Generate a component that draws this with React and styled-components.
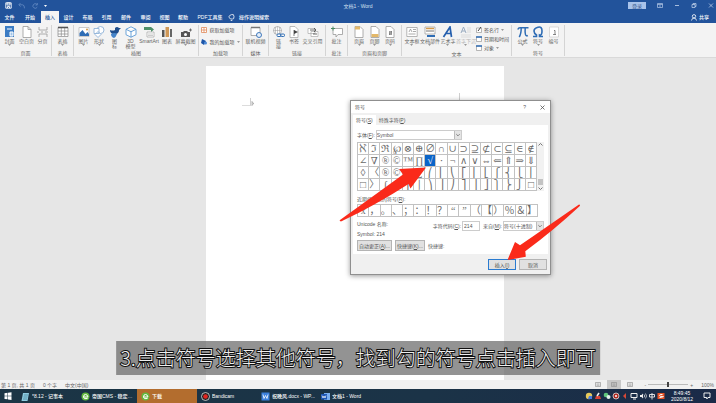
import React, { useState } from 'react';
import styled, { createGlobalStyle, css } from 'styled-components';

const GlobalStyle = createGlobalStyle`
  * {
    box-sizing: border-box;
  }

  body {
    margin: 0;
    font-family: 'Liberation Sans', 'Noto Sans CJK SC', sans-serif;
    font-size: 5px;
    line-height: 6px;
    color: #555;
  }

  button, input, select {
    font: inherit;
    color: inherit;
    margin: 0;
    padding: 0;
    border: none;
    border-radius: 0;
    background: transparent;
    appearance: none;
    outline: none;
  }

  svg {
    display: block;
    flex: none;
  }
`;

const Screen = styled.div`
  position: relative;
  display: flex;
  flex-direction: column;
  height: 100vh;
  overflow: hidden;
  background: #e6e6e6;
`;

const TitleBar = styled.header`
  display: grid;
  grid-template-columns: 1fr auto 1fr;
  align-items: center;
  height: 11px;
  flex: none;
  background: #22539b;
  color: #d5e0f0;
`;

const QuickAccess = styled.div`
  display: flex;
  align-items: center;
  gap: 6px;
  padding-left: 5px;
`;

const WindowControls = styled.div`
  display: flex;
  align-items: center;
  justify-content: flex-end;
  gap: 11px;
  padding-right: 2px;
`;

const LoginButton = styled.button`
  width: 18px;
  height: 7px;
  background: #a9c3ea;
  color: #33558c;
`;

const TabBar = styled.nav`
  display: flex;
  align-items: stretch;
  height: 12px;
  flex: none;
  background: #22539b;
`;

const TabButton = styled.button`
  width: ${({ $width }) => $width}px;
  color: #fff;
  font-weight: 500;
  white-space: nowrap;

  ${({ $active }) =>
    $active &&
    css`
      background: #f4f4f4;
      color: #2b579a;
    `}
`;

const Hint = styled.button`
  display: flex;
  align-items: center;
  gap: 4px;
  color: #fff;
  font-weight: 500;
  white-space: nowrap;
`;

const Share = styled(Hint)`
  gap: 2px;
  margin-left: auto;
  padding-right: 7px;
`;

const Ribbon = styled.div`
  display: flex;
  height: 35px;
  flex: none;
  padding: 2px 0 1px;
  background: #f3f3f3;
  border-bottom: 1px solid #d9d9d9;
`;

const Group = styled.section`
  display: flex;
  flex-direction: column;
  justify-content: space-between;
  width: ${({ $width }) => $width}px;
  border-right: 1px solid #d4d4d4;
`;

const GroupBody = styled.div`
  display: flex;
  justify-content: center;
`;

const GroupLabel = styled.div`
  text-align: center;
  white-space: nowrap;
  color: #666;
`;

const Tool = styled.button`
  display: flex;
  flex-direction: column;
  align-items: center;
  width: ${({ $width }) => $width}px;
  flex: none;
  padding-top: 1px;
  white-space: pre;
  line-height: 5px;
  color: ${({ $dim }) => ($dim ? '#b5b5b5' : '#666')};
`;

const ToolIcon = styled.svg`
  width: 12px;
  height: 12px;
  margin-bottom: 1px;
`;

const Stack = styled.div`
  display: flex;
  flex-direction: column;
  gap: ${({ $gap }) => $gap}px;
  padding-top: 2px;
`;

const RowTool = styled.button`
  display: flex;
  align-items: center;
  gap: 2px;
  white-space: nowrap;
`;

const Canvas = styled.main`
  flex: 1;
  min-height: 0;
  display: flex;
  justify-content: center;
  padding: 8px 6px 0 0;
`;

const Paper = styled.article`
  display: flex;
  justify-content: space-between;
  width: 42%;
  min-width: 296px;
  padding: 27px 36px 0;
  background: #fff;
`;

const Margin = styled.div`
  width: 9px;
  height: 8px;
  border-bottom: 1px solid #dcdcdc;
  ${({ $side }) => ($side === 'left' ? 'border-right' : 'border-left')}: 1px solid #cfcfcf;
`;

const StartMark = styled.div`
  display: flex;
  align-items: flex-end;
  height: 13px;
`;

const Dialog = styled.div`
  position: absolute;
  left: 350px;
  top: 100px;
  width: 201px;
  background: #f0f0f0;
  border: 1px solid #8f8f8f;
  box-shadow: 0 1px 5px rgba(0, 0, 0, 0.4);
`;

const DialogTitle = styled.div`
  display: flex;
  align-items: center;
  height: 12px;
  padding: 0 5px 0 4px;
  background: #fff;
`;

const DialogActions = styled.div`
  display: flex;
  align-items: center;
  gap: 14px;
  margin-left: auto;
`;

const DialogTabs = styled.div`
  display: flex;
  height: 12px;
  padding: 2px 2px 0;
`;

const DialogTab = styled.button`
  padding: 0 3px;
  background: ${({ $active }) => ($active ? '#fff' : 'transparent')};
`;

const Panel = styled.div`
  margin: 0 2px;
  padding: 5px 4px 3px;
  background: #fff;
`;

const Field = styled.div`
  display: flex;
  align-items: center;
  gap: 1px;
  height: 10px;
`;

const SelectBox = styled.div`
  display: flex;
  align-items: center;
  width: ${({ $width }) => $width}px;
  height: 10px;
  border: 1px solid #ccc;

  select {
    flex: 1;
    min-width: 0;
  }

  svg {
    width: 7px;
    height: 8px;
    background: #e4e4e4;
    border-left: 1px solid #bbb;
  }
`;

const CodeInput = styled.input`
  width: 18px;
  height: 10px;
  padding-left: 1px;
  border: 1px solid #ccc;
  margin-right: 2px;
`;

const SymbolArea = styled.div`
  display: flex;
  margin-top: 2px;
`;

const SymbolGrid = styled.div`
  display: grid;
  grid-template-columns: repeat(16, 1fr);
  gap: 1px;
  width: 181px;
  padding: 1px;
  background: #c2c2c2;
`;

const SymbolCell = styled.button`
  height: 11px;
  min-width: 0;
  overflow: hidden;
  background: ${({ $selected }) => ($selected ? '#0a64c8' : '#fff')};
  color: ${({ $selected }) => ($selected ? '#fff' : '#6a6a6a')};
  font-family: 'Liberation Serif', 'DejaVu Serif', 'Noto Sans CJK SC', serif;
  font-size: 10px;
  line-height: 11px;
`;

const ScrollTrack = styled.div`
  display: flex;
  flex-direction: column;
  justify-content: space-between;
  width: 7px;
  background: #f2f2f2;
`;

const ScrollThumb = styled.div`
  height: 6px;
  margin: auto 1px 1px;
  background: #c4c4c4;
`;

const Caption = styled.div`
  margin: 5px 0 2px;
`;

const Details = styled.div`
  display: flex;
  justify-content: space-between;
  padding-top: 4px;
`;

const NameInfo = styled.div`
  display: flex;
  flex-direction: column;
  gap: 4px;
`;

const ShortcutRow = styled.div`
  display: flex;
  align-items: center;
  gap: 3px;
  margin-top: 3px;
`;

const PushButton = styled.button`
  width: ${({ $width }) => $width}px;
  height: 11px;
  background: #e1e1e1;
  border: 1px solid ${({ $primary }) => ($primary ? '#2a7bd0' : '#b4b4b4')};
  white-space: nowrap;
`;

const DialogFooter = styled.div`
  display: flex;
  justify-content: flex-end;
  gap: 3px;
  padding: 5px 3px 4px;
`;

const Arrows = styled.svg`
  position: absolute;
  left: 335px;
  top: 160px;
  width: 250px;
  height: 105px;
  pointer-events: none;
`;

const Subtitle = styled.div`
  position: absolute;
  left: 50%;
  bottom: 28px;
  transform: translateX(-50%);
  padding: 0 4px;
  background: rgba(96, 96, 96, 0.68);
  color: #eee;
  font-family: 'Noto Sans CJK SC', sans-serif;
  font-size: 20px;
  font-weight: 300;
  line-height: 34px;
  white-space: nowrap;
  -webkit-text-stroke: 2px #111;
  paint-order: stroke fill;
`;

const StatusBar = styled.footer`
  display: flex;
  align-items: center;
  gap: 8px;
  height: 9px;
  flex: none;
  padding: 0 2px 0 1px;
  background: #f1f1f1;
  color: #666;
`;

const ViewButtons = styled.div`
  display: flex;
  gap: 2px;
  margin-left: auto;
`;

const ViewButton = styled.button`
  display: flex;
  align-items: center;
  justify-content: center;
  width: 14px;
  height: 9px;
  background: ${({ $active }) => ($active ? '#c8c8c8' : 'transparent')};
`;

const ZoomControl = styled.div`
  display: flex;
  align-items: center;
  gap: 2px;
`;

const ZoomSlider = styled.input`
  width: 40px;
  height: 7px;
  background: linear-gradient(#bbb, #bbb) center / 100% 1px no-repeat;

  &::-webkit-slider-thumb {
    appearance: none;
    width: 2px;
    height: 5px;
    background: #444;
  }
`;

const TaskBar = styled.div`
  display: flex;
  align-items: stretch;
  height: 14px;
  flex: none;
  background: linear-gradient(90deg, #1b3545, #1b3347 60%, #1a2a48);
  color: #fff;
  font-weight: 500;
`;

const StartButton = styled.button`
  width: 17px;
  padding-left: 4px;
`;

const Task = styled.button`
  display: flex;
  align-items: center;
  gap: 2px;
  width: 60px;
  padding: 0 1px 0 4px;
  background: ${({ $highlight }) => ($highlight ? '#b36d2e' : 'transparent')};
  text-align: left;

  span {
    flex: 1;
    min-width: 0;
    overflow: hidden;
    text-overflow: ellipsis;
    white-space: nowrap;
  }
`;

const Tray = styled.div`
  display: flex;
  align-items: center;
  gap: 1px;
  margin-left: auto;
`;

const Clock = styled.div`
  width: 34px;
  padding-top: 1px;
  text-align: center;
`;

const blue = '#2f6db5';

const icons = {
  cover: <><rect x="1" y="0" width="9" height="11" fill="#3b7cc4" /><path d="M3 3h5M6 6h3v4H6z" stroke="#fff" fill="#9ec4ea" /></>,
  page: <path d="M2 .5h5l3 3v8H2zM7 .5v3h3" fill="#fff" stroke="#999" strokeWidth=".8" />,
  pageBreak: <path d="M2 1v3h8V1M2 11V8h8v3M0 6h2M4 6h2M8 6h3" fill="none" stroke="#999" strokeWidth=".8" />,
  table: <><path d="M1 1.5h10v9H1zM4.3 2v8M7.7 2v8M1 5h10M1 8h10" fill="#fff" stroke="#888" strokeWidth=".7" /><path d="M1 1.5h10" stroke="#555" strokeWidth="1.6" /></>,
  picture: <><path d="M1 1.5h10v9H1z" fill="#fff" stroke="#aaa" strokeWidth=".6" /><path d="M1.5 10V7l3-3 3 4 2-2 1.500 2v2z" fill={blue} /><circle cx="9" cy="3.500" r="1" fill="#d59b4a" /></>,
  shapes: <><circle cx="7.500" cy="4" r="3.500" fill="#fff" stroke="#8fb2d8" strokeWidth=".9" /><path d="M1 2.500h5v5H1zM5 5.500l3 3-3 3-3-3z" fill="#fff" stroke="#8fb2d8" strokeWidth=".9" /></>,
  duck: <><path d="M6 2q2-2 4 0l2 0-2 2q0 3-3 4H4Q1 7 1 4q3 1 5 0z" fill="#1f4e8c" /><path d="M2 8q4-2 6 0-1 3-3 4-3-1-3-4z" fill="#4684c9" /></>,
  cube: <path d="M6 .8l5 2.500v5.400L6 11.200 1 8.700V3.300zM1 3.300l5 2.500 5-2.500M6 5.800v5.400" fill="#fff" stroke="#5b9ad5" strokeWidth=".9" />,
  smartArt: <><path d="M1 1h7l3 2.500L8 6V4H1z" fill="#4f8f68" /><path d="M4 6h7v5H4z" fill="#fff" stroke="#999" strokeWidth=".6" /><path d="M5 8h5M5 9.500h5" stroke="#aaa" strokeWidth=".6" /></>,
  chart: <><path d="M1 4h2.500v7H1z" fill="#555" /><path d="M4.500 1H8v10H4.500z" fill="#d09857" /><path d="M9 3h2v8H9z" fill="#666" /></>,
  camera: <><path d="M1 6h2l1-1h3l1 1h2v5H1z" fill="#555" /><circle cx="5.500" cy="8.500" r="1.500" fill="#fff" /><path d="M9 4h3M10.500 2.500v3" stroke="#555" strokeWidth=".8" /></>,
  video: <><path d="M1 1.500h9v8H1z" fill="#fff" stroke="#999" strokeWidth=".8" /><path d="M1 1.500h9" stroke="#777" strokeWidth="1.500" /><circle cx="9" cy="9" r="2.500" fill="#e5effa" stroke={blue} strokeWidth=".9" /></>,
  link: <><circle cx="4.500" cy="4.500" r="4" fill="#fff" stroke="#999" strokeWidth=".7" /><path d="M.5 4.500h8M4.500.5v8M2.500 1.200v6.600M6.500 1.200v6.600" stroke="#999" strokeWidth=".5" /><rect x="4" y="8" width="4" height="2.500" rx="1" fill="#fff" stroke={blue} /><rect x="7.500" y="8" width="4" height="2.500" rx="1" fill="none" stroke={blue} /></>,
  bookmark: <><path d="M2 .5h5l3 3v8H2z" fill="#fff" stroke="#aaa" strokeWidth=".8" /><path d="M6 4l4 2-4 2z" fill="#444" /><path d="M6 4v6" stroke="#444" strokeWidth=".7" /></>,
  crossRef: <><path d="M1 2.500h7v5H1zM4 5.500h7v5H4z" fill="#fff" stroke="#aaa" strokeWidth=".7" /><path d="M3 4h5M6 8h4M7 2l2 2-2 2" fill="none" stroke="#444" strokeWidth=".8" /></>,
  comment: <><path d="M2 2.500h9.500v6H7l-2 2.500V8.500H2z" fill="#fff" stroke="#999" strokeWidth=".8" /><path d="M0 2.500h4M2 .5v4" stroke="#4b8a63" strokeWidth="1" /></>,
  header: <><path d="M2 .5h5l3 3v8H2z" fill="#fff" stroke="#999" strokeWidth=".8" /><path d="M2 .5h5v3H2z" fill="#e3b86a" /></>,
  footer: <><path d="M2 .5h5l3 3v8H2z" fill="#fff" stroke="#999" strokeWidth=".8" /><path d="M2.500 8h7v3h-7z" fill="#e3b86a" /></>,
  pageNo: <><path d="M2 .5h5l3 3v8H2z" fill="#fff" stroke="#999" strokeWidth=".8" /><path d="M5 6h3M5 8h3M6 5l-.5 4M7.500 5L7 9" stroke="#444" strokeWidth=".6" /></>,
  textBox: <><path d="M.8 1.500h10.400v9H.8z" fill="#fff" stroke="#999" strokeWidth=".7" /><path d="M3 6l1.500-3L6 6M7 3.500h3M7 5.500h3M2.500 8h7" fill="none" stroke="#888" strokeWidth=".7" /></>,
  parts: <><path d="M1 1h10v7H1z" fill="#fff" stroke="#999" strokeWidth=".7" /><path d="M2 2.500h8" stroke="#d59b4a" strokeWidth="1.500" /><path d="M2 5h8" stroke="#777" /><path d="M3 10h8" stroke={blue} strokeWidth="2" /></>,
  wordArt: <path d="M1.500 11L8 1l1.500 10M4 7.500h5" fill="none" stroke="#245fae" strokeWidth="1.700" />,
  dropCap: <><path d="M1 7l2.500-6L6 7M2 5h3" fill="none" stroke="#9aabc0" strokeWidth="1" /><path d="M7 2h4M7 4h4M7 6h4M1 9h10M1 11h10" stroke="#ccc" strokeWidth=".6" /></>,
  pi: <path d="M.8 3.500Q1.500 1.800 3 1.800h8.500M4.200 2q0 6-2 9M8.200 2Q7.500 11.500 10.800 9.500" fill="none" stroke={blue} strokeWidth="1.500" />,
  omega: <path d="M1 10.500h3.500V9Q2 7.500 2 5t4-3.700T10 5 7.500 9v1.500H11" fill="none" stroke={blue} strokeWidth="1.600" />,
  number: <><path d="M1.500 1h9v10h-9z" fill="#fff" stroke="#ccc" strokeWidth=".7" /><path d="M6 4.500h1v4M5 8.500h3" fill="none" stroke="#555" strokeWidth=".7" /></>,
};

const tabs = [
  ['文件', 19], ['开始', 22], ['插入', 18], ['设计', 19], ['布局', 19], ['引用', 19],
  ['邮件', 20], ['审阅', 19], ['视图', 19], ['帮助', 18], ['PDF工具集', 36],
];

const groups = [
  { label: '页面', width: 52, tools: [['cover', '封面', 17, 1], ['page', '空白页', 17], ['pageBreak', '分页', 15]] },
  { label: '表格', width: 22, tools: [['table', '表格', 20, 1]] },
  {
    label: '插图',
    width: 125,
    tools: [
      ['picture', '图片', 16, 1], ['shapes', '形状', 15, 1], ['duck', '图\n标', 16], ['cube', '3D\n模型', 16],
      ['smartArt', 'SmartArt', 21], ['chart', '图表', 15], ['camera', '屏幕截图', 22, 1],
    ],
  },
  { label: '加载项', width: 44, custom: 'addins' },
  { label: '媒体', width: 26, tools: [['video', '联机视频', 24]] },
  { label: '链接', width: 57, tools: [['link', '链\n接', 16], ['bookmark', '书签', 15], ['crossRef', '交叉引用', 22]] },
  { label: '批注', width: 22, tools: [['comment', '批注', 20]] },
  { label: '页眉和页脚', width: 54, tools: [['header', '页眉', 16, 1], ['footer', '页脚', 15, 1], ['pageNo', '页码', 16, 1]] },
  {
    label: '文本',
    width: 110,
    custom: 'text',
    tools: [['textBox', '文本框', 16, 1], ['parts', '文档部件', 20, 1], ['wordArt', '艺术字', 16, 1], ['dropCap', '首字下沉', 20, 1, true]],
  },
  { label: '符号', width: 53, tools: [['pi', '公式', 16, 1], ['omega', '符号', 15, 1], ['number', '编号', 16]] },
];

const symbols = [
  ...'ℵℑℜ℘⊗⊕∅∩∪⊃⊇⊄⊂⊆∈∉',
  ...'∠∇®©™∏√⋅¬∧∨⇔⇐⇑⇒⇓',
  ...'◊〈®©™∑⎛⎜⎝⎡⎢⎣⎧⎨⎩⎪',
  ...'□〉∫⌠⎮⌡⎞⎟⎠⎤⎥⎦⎫⎬⎭□',
];

const recent = [...'x，。、；：！？“”（【）％＆】'];

const Caret = () => (
  <svg width="3" height="2" viewBox="0 0 3 2">
    <path d="M0 0h3L1.500 2z" fill="#999" />
  </svg>
);

const AddIns = () => (
  <Stack $gap={6}>
    <RowTool>
      <svg width="6" height="6" viewBox="0 0 6 6">
        <path d="M.5.5h5v5h-5zM.5 3h5M3 .5v5" fill="#fff" stroke="#e08a5a" strokeWidth=".8" />
      </svg>
      获取加载项
    </RowTool>
    <RowTool>
      <svg width="6" height="6" viewBox="0 0 6 6">
        <path d="M1 0l4 2-2 4-3-2z" fill="#1d55a8" />
        <circle cx="4.500" cy="4" r="1.500" fill="#4d8bd6" />
      </svg>
      我的加载项 <Caret />
    </RowTool>
  </Stack>
);

const TextRows = () => (
  <Stack $gap={3}>
    {['签名行', '日期和时间', '对象'].map((label, i) => (
      <RowTool key={label}>
        <svg width="6" height="6" viewBox="0 0 6 6">
          <path d="M.5 1h5v4.500h-5z" fill="#fff" stroke="#999" strokeWidth=".7" />
          {i === 0 ? <path d="M2 4l3-4" stroke="#444" /> : <path d="M0 1h6" stroke={blue} strokeWidth="1.500" />}
        </svg>
        {label} {i !== 1 && <Caret />}
      </RowTool>
    ))}
  </Stack>
);

const RibbonGroup = ({ label, width, tools = [], custom }) => (
  <Group $width={width}>
    <GroupBody>
      {tools.map(([icon, text, w, caret, dim]) => (
        <Tool key={icon} $width={w} $dim={dim}>
          <ToolIcon viewBox="0 0 12 12">{icons[icon]}</ToolIcon>
          {text}
          {caret && <Caret />}
        </Tool>
      ))}
      {custom === 'addins' && <AddIns />}
      {custom === 'text' && <TextRows />}
    </GroupBody>
    <GroupLabel>{label}</GroupLabel>
  </Group>
);

const DropArrow = () => (
  <svg viewBox="0 0 7 8">
    <path d="M1.500 3l2 2 2-2" fill="none" stroke="#555" strokeWidth=".8" />
  </svg>
);

const SymbolDialog = () => {
  const [selected, setSelected] = useState(22);
  const [code, setCode] = useState('214');

  return (
    <Dialog role="dialog" aria-label="符号">
      <DialogTitle>
        符号
        <DialogActions>
          <button type="button">?</button>
          <button type="button" aria-label="关闭">
            <svg width="5" height="5" viewBox="0 0 5 5">
              <path d="M.5.5l4 4M4.500.5l-4 4" stroke="#555" strokeWidth=".8" />
            </svg>
          </button>
        </DialogActions>
      </DialogTitle>
      <DialogTabs>
        <DialogTab type="button" $active>符号(<u>S</u>)</DialogTab>
        <DialogTab type="button">特殊字符(<u>P</u>)</DialogTab>
      </DialogTabs>
      <Panel>
        <Field>
          <label htmlFor="font">字体(<u>F</u>):</label>
          <SelectBox $width={86}>
            <select id="font"><option>Symbol</option></select>
            <DropArrow />
          </SelectBox>
        </Field>
        <SymbolArea>
          <SymbolGrid>
            {symbols.map((s, i) => (
              <SymbolCell key={i} type="button" $selected={i === selected} onClick={() => setSelected(i)}>
                {s}
              </SymbolCell>
            ))}
          </SymbolGrid>
          <ScrollTrack>
            <svg width="7" height="5" viewBox="0 0 7 5"><path d="M1.500 3.500l2-2 2 2" fill="none" stroke="#777" /></svg>
            <ScrollThumb />
            <svg width="7" height="5" viewBox="0 0 7 5"><path d="M1.500 1.500l2 2 2-2" fill="none" stroke="#777" /></svg>
          </ScrollTrack>
        </SymbolArea>
        <Caption>近期使用过的符号(<u>R</u>):</Caption>
        <SymbolGrid>
          {recent.map((s) => <SymbolCell key={s} type="button">{s}</SymbolCell>)}
        </SymbolGrid>
        <Details>
          <NameInfo>
            <span>Unicode 名称:</span>
            <span>Symbol: 214</span>
          </NameInfo>
          <Field>
            <label htmlFor="code">字符代码(<u>C</u>):</label>
            <CodeInput id="code" value={code} onChange={(e) => setCode(e.target.value)} />
            <label htmlFor="from">来自(<u>M</u>):</label>
            <SelectBox $width={41}>
              <select id="from"><option>符号(十进制)</option></select>
              <DropArrow />
            </SelectBox>
          </Field>
        </Details>
        <ShortcutRow>
          <PushButton type="button" $width={35}>自动更正(<u>A</u>)...</PushButton>
          <PushButton type="button" $width={30}>快捷键(<u>K</u>)...</PushButton>
          <span>快捷键:</span>
        </ShortcutRow>
      </Panel>
      <DialogFooter>
        <PushButton type="button" $width={28} $primary>插入(<u>I</u>)</PushButton>
        <PushButton type="button" $width={28}>取消</PushButton>
      </DialogFooter>
    </Dialog>
  );
};

const tasks = [
  ['*8.12 - 记事本', <><path d="M2 1h6L6.500 9h-6z" fill="#8ecbe0" /><path d="M3 3h4M2.500 5h4M2 7h4" stroke="#33738c" strokeWidth=".6" /></>],
  ['帝国CMS - 稳定可靠', <><circle cx="4.500" cy="4.500" r="4" fill="#63b93e" /><path d="M2.500 5h4.500Q6.500 2.500 4.500 2.500T2.500 5t4 1.500" fill="none" stroke="#fff" /></>],
  ['下载', <><circle cx="4.500" cy="4.500" r="4" fill="#63b93e" /><path d="M2.500 5h4.500Q6.500 2.500 4.500 2.500T2.500 5t4 1.500" fill="none" stroke="#fff" /></>],
  ['Bandicam', <><circle cx="4.500" cy="4.500" r="4" fill="#222" stroke="#ddd" strokeWidth=".8" /><circle cx="4.500" cy="4.500" r="2.300" fill="#e32620" /></>],
  ['祝晚风.docx - WP...', <><path d="M.5.5h8v8h-8z" fill="#3b80dd" /><path d="M2 2.500l1 4 1.500-3 1.500 3 1-4" fill="none" stroke="#fff" strokeWidth=".8" /></>],
  ['文档1 - Word', <><path d="M3 1h6v7H3z" fill="#79aef0" /><path d="M0 2h6v5.500H0z" fill="#1d56b5" /><path d="M1 3.500l1 2.500 1-2 1 2 1-2.500" fill="none" stroke="#fff" strokeWidth=".7" /></>],
];

const tray = [
  <><circle cx="4" cy="4" r="3.200" fill="#e6c95c" /><path d="M4 4h3v3H3z" fill="#4779df" /></>,
  <><path d="M1 7l1-3h4l1 3z" fill="#d84235" /><path d="M3 4l2-3" stroke="#eee" strokeWidth="1.500" /></>,
  <><circle cx="3" cy="3" r="2.300" fill="#5fc77b" /><circle cx="5.500" cy="5" r="2" fill="#e3f4ea" /></>,
  <><circle cx="4" cy="4" r="3" fill="#ad2922" stroke="#ddd" strokeWidth=".8" /><circle cx="4" cy="4" r="1" fill="#fff" /></>,
  <path d="M2 4l3-3v6z" fill="#d64836" />,
  <path d="M1 1.500h6v4H1zM3 7h3" fill="none" stroke="#eee" />,
  <><path d="M1 3h1.500L4 1.500v5L2.500 5H1z" fill="#eee" /><path d="M5 2.500q1.500 1.500 0 3M6.500 1.500q2 2.500 0 5" fill="none" stroke="#eee" strokeWidth=".7" /></>,
  <path d="M1.500 2.500h5v2.500h-5zM4 1v6.500" fill="none" stroke="#eee" strokeWidth=".9" />,
  <><path d="M.5 1h7v6h-7z" fill="#e65327" /><path d="M5.500 2.500Q2.500 2 2.500 3.300T5.500 4.500 2.500 5.600" fill="none" stroke="#fff" /></>,
];

const App = () => {
  const [activeTab, setActiveTab] = useState('插入');

  return (
    <Screen>
      <GlobalStyle />
      <TitleBar>
        <QuickAccess>
          <svg width="7" height="7" viewBox="0 0 7 7">
            <path d="M.8.8h5.400v5.400H.8zM2 1h3v2H2zM2.500 6V4.500h2V6" fill="none" stroke="#fff" strokeWidth=".9" />
          </svg>
          <svg width="8" height="6" viewBox="0 0 8 6">
            <path d="M2.500 0L.8 1.800l1.700 1.800M1 1.800h3.500q2 0 2 3.500" fill="none" stroke="#5f86c0" strokeWidth=".9" />
          </svg>
          <svg width="6" height="6" viewBox="0 0 6 6">
            <path d="M5 1.500A2.300 2.300 0 1 0 5.300 4M5.300 0v2H3.500" fill="none" stroke="#5f86c0" strokeWidth=".9" />
          </svg>
          <svg width="3" height="3" viewBox="0 0 3 3">
            <path d="M0 0h3M0 1h3L1.500 3z" fill="#fff" />
          </svg>
        </QuickAccess>
        <span>文档1 - Word</span>
        <WindowControls>
          <LoginButton type="button">登录</LoginButton>
          <svg width="6" height="5" viewBox="0 0 6 5"><path d="M.5.5h5v4h-5zM.5 1.500h5M3 2v2" fill="none" stroke="#b5c9e6" strokeWidth=".7" /></svg>
          <svg width="6" height="5" viewBox="0 0 6 5"><path d="M1 2.500h4" stroke="#c9d8ee" strokeWidth=".8" /></svg>
          <svg width="6" height="5" viewBox="0 0 6 5"><path d="M1 1.500h3v3H1zM2 1.500v-1h3v3H4" fill="none" stroke="#c9d8ee" strokeWidth=".7" /></svg>
          <svg width="6" height="5" viewBox="0 0 6 5"><path d="M1 .5l4 4M5 .5l-4 4" stroke="#c9d8ee" strokeWidth=".7" /></svg>
        </WindowControls>
      </TitleBar>
      <TabBar>
        {tabs.map(([label, width]) => (
          <TabButton
            key={label}
            type="button"
            $width={width}
            $active={label === activeTab}
            onClick={() => setActiveTab(label)}
          >
            {label}
          </TabButton>
        ))}
        <Hint type="button">
          <svg width="7" height="7" viewBox="0 0 7 7">
            <path d="M2.500 5Q1 3.700 1 2.600T3.500.6 6 2.600 4.500 5zM2.700 6.500h1.600" fill="none" stroke="#fff" strokeWidth=".8" />
          </svg>
          操作说明搜索
        </Hint>
        <Share type="button">
          <svg width="6" height="7" viewBox="0 0 6 7">
            <circle cx="3" cy="2.300" r="1.700" fill="none" stroke="#fff" strokeWidth=".8" />
            <path d="M.5 6.500Q1 4 3 4t2.500 2.500" fill="none" stroke="#fff" strokeWidth=".8" />
          </svg>
          共享
        </Share>
      </TabBar>
      <Ribbon>
        {groups.map((group) => <RibbonGroup key={group.label} {...group} />)}
      </Ribbon>
      <Canvas>
        <Paper>
          <StartMark>
            <Stack $gap={0}>
              <Margin $side="left" />
            </Stack>
            <svg width="4" height="5" viewBox="0 0 4 5"><path d="M1 0v5M1 1.500l2 1-2 1" fill="none" stroke="#999" strokeWidth=".7" /></svg>
          </StartMark>
          <Margin $side="right" />
        </Paper>
      </Canvas>
      <StatusBar>
        <span>第 1 页, 共 1 页</span>
        <span>0 个字</span>
        <span>中文(中国)</span>
        <ViewButtons>
          {[0, 1, 2].map((i) => (
            <ViewButton key={i} type="button" $active={i === 1} aria-label={['阅读视图', '页面视图', 'Web 版式'][i]}>
              <svg width="6" height="5" viewBox="0 0 6 5">
                <path d="M.5.5h5v4h-5zM1.500 2h3M1.500 3.300h3" fill="none" stroke="#888" strokeWidth=".6" />
              </svg>
            </ViewButton>
          ))}
        </ViewButtons>
        <ZoomControl>
          <span>-</span>
          <ZoomSlider type="range" min="0" max="200" defaultValue="100" aria-label="缩放" />
          <span>+</span>
        </ZoomControl>
        <span>100%</span>
      </StatusBar>
      <TaskBar>
        <StartButton type="button" aria-label="开始菜单">
          <svg width="8" height="8" viewBox="0 0 8 8">
            <path d="M.5 1.200l3-.4v3h-3zM4 .7L7.500.2v3.600H4zM.5 4.300h3v3l-3-.4zM4 4.300h3.500v3.600L4 7.400z" fill="#fff" />
          </svg>
        </StartButton>
        {tasks.map(([label, icon]) => (
          <Task key={label} type="button" $highlight={label === '下载'}>
            <svg width="9" height="9" viewBox="0 0 9 9">{icon}</svg>
            <span>{label}</span>
          </Task>
        ))}
        <Tray>
          {tray.map((icon, i) => (
            <svg key={i} width="8" height="8" viewBox="0 0 8 8">{icon}</svg>
          ))}
        </Tray>
        <Clock>
          8:49:45
          <br />
          2020/8/12
        </Clock>
        <StartButton type="button" aria-label="通知">
          <svg width="8" height="8" viewBox="0 0 8 8">
            <path d="M1 1h6v4.500H5L3.800 7V5.500H1z" fill="none" stroke="#fff" strokeWidth=".9" />
          </svg>
        </StartButton>
      </TaskBar>
      <SymbolDialog />
      <Arrows viewBox="335 160 250 105">
        <path
          d="M426 167.500L399 169l4 5.500Q372 197 340 220q-1 1 1 1.500Q376 205 408.500 184l2 4.500zM507.500 260l7.500-18 5 3.300Q548 226 579 204.500q1.500 0 .8 1.500Q554 230 525.300 251.300l.5 5.400z"
          fill="#fa2a1a"
        />
      </Arrows>
      <Subtitle>3.点击符号选择其他符号，找到勾的符号点击插入即可</Subtitle>
    </Screen>
  );
};

export default App;
